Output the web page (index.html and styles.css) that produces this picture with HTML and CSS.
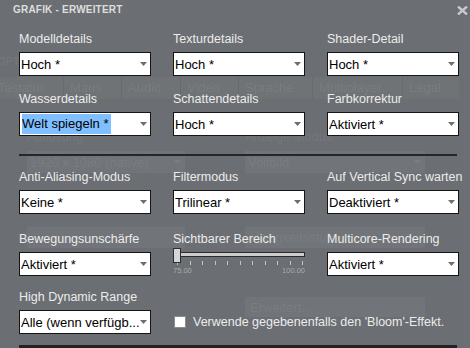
FILE: index.html
```html
<!DOCTYPE html>
<html lang="de">
<head>
<meta charset="utf-8">
<title>Grafik - Erweitert</title>
<link rel="stylesheet" href="styles.css">
</head>
<body>
<div class="screen">
  <div class="backdrop">
    <div class="bd-title">OPTIONEN</div>
    <div class="bd-tabs">
      <span class="bd-tab w64">Tastatur</span>
      <span class="bd-tab w58">Maus</span>
      <span class="bd-tab w59">Audio</span>
      <span class="bd-tab w58">Video</span>
      <span class="bd-tab w74">Sprache</span>
      <span class="bd-tab w90">Multiplayer</span>
      <span class="bd-tab w56">Legal</span>
    </div>
    <div class="bd-grid">
      <div class="bd-field">
        <div class="bd-label">Auflösung</div>
        <div class="bd-box">1920 x 1080 (native)<svg class="bd-arrow" width="7" height="4" viewBox="0 0 7 4"><path d="M0 0H7L3.5 4Z"/></svg></div>
      </div>
      <div class="bd-field">
        <div class="bd-label">Anzeige-Modus</div>
        <div class="bd-box">Vollbild<svg class="bd-arrow" width="7" height="4" viewBox="0 0 7 4"><path d="M0 0H7L3.5 4Z"/></svg></div>
      </div>
    </div>
    <div class="bd-grid bd-second">
      <div class="bd-box bd-plain"></div>
      <div class="bd-box bd-plain">Helligkeitsstufe</div>
    </div>
    <div class="bd-grid bd-third">
      <div class="bd-empty"></div>
      <div class="bd-box bd-plain bd-button">Erweitert...</div>
    </div>
  </div>

  <div class="dialog">
    <div class="header">
      <div class="title">GRAFIK - ERWEITERT</div>
      <svg class="close" width="11" height="9" viewBox="0 0 11 9"><path d="M1 0.5L10 8.5M10 0.5L1 8.5"/></svg>
    </div>

    <div class="body">
      <div class="row">
        <div class="field">
          <div class="label">Modelldetails</div>
          <div class="select"><span class="value">Hoch *</span><svg class="arrow" width="7" height="4" viewBox="0 0 7 4"><path d="M0 0H7L3.5 4Z"/></svg></div>
        </div>
        <div class="field">
          <div class="label">Texturdetails</div>
          <div class="select"><span class="value">Hoch *</span><svg class="arrow" width="7" height="4" viewBox="0 0 7 4"><path d="M0 0H7L3.5 4Z"/></svg></div>
        </div>
        <div class="field">
          <div class="label">Shader-Detail</div>
          <div class="select"><span class="value">Hoch *</span><svg class="arrow" width="7" height="4" viewBox="0 0 7 4"><path d="M0 0H7L3.5 4Z"/></svg></div>
        </div>
      </div>

      <div class="row row-2">
        <div class="field">
          <div class="label">Wasserdetails</div>
          <div class="select"><span class="value selected">Welt spiegeln *</span><svg class="arrow" width="7" height="4" viewBox="0 0 7 4"><path d="M0 0H7L3.5 4Z"/></svg></div>
        </div>
        <div class="field">
          <div class="label">Schattendetails</div>
          <div class="select"><span class="value">Hoch *</span><svg class="arrow" width="7" height="4" viewBox="0 0 7 4"><path d="M0 0H7L3.5 4Z"/></svg></div>
        </div>
        <div class="field">
          <div class="label">Farbkorrektur</div>
          <div class="select"><span class="value">Aktiviert *</span><svg class="arrow" width="7" height="4" viewBox="0 0 7 4"><path d="M0 0H7L3.5 4Z"/></svg></div>
        </div>
      </div>

      <div class="separator"></div>

      <div class="row row-3">
        <div class="field">
          <div class="label">Anti-Aliasing-Modus</div>
          <div class="select"><span class="value">Keine *</span><svg class="arrow" width="7" height="4" viewBox="0 0 7 4"><path d="M0 0H7L3.5 4Z"/></svg></div>
        </div>
        <div class="field">
          <div class="label">Filtermodus</div>
          <div class="select"><span class="value">Trilinear *</span><svg class="arrow" width="7" height="4" viewBox="0 0 7 4"><path d="M0 0H7L3.5 4Z"/></svg></div>
        </div>
        <div class="field">
          <div class="label">Auf Vertical Sync warten</div>
          <div class="select"><span class="value">Deaktiviert *</span><svg class="arrow" width="7" height="4" viewBox="0 0 7 4"><path d="M0 0H7L3.5 4Z"/></svg></div>
        </div>
      </div>

      <div class="row row-4">
        <div class="field">
          <div class="label">Bewegungsunschärfe</div>
          <div class="select"><span class="value">Aktiviert *</span><svg class="arrow" width="7" height="4" viewBox="0 0 7 4"><path d="M0 0H7L3.5 4Z"/></svg></div>
        </div>
        <div class="field">
          <div class="label">Sichtbarer Bereich</div>
          <div class="slider">
            <div class="track"></div>
            <div class="thumb"></div>
            <div class="ticks">
              <i></i><i></i><i></i><i></i><i></i><i></i><i></i><i></i><i></i><i></i><i></i>
            </div>
            <div class="scale"><span>75.00</span><span>100.00</span></div>
          </div>
        </div>
        <div class="field">
          <div class="label">Multicore-Rendering</div>
          <div class="select"><span class="value">Aktiviert *</span><svg class="arrow" width="7" height="4" viewBox="0 0 7 4"><path d="M0 0H7L3.5 4Z"/></svg></div>
        </div>
      </div>

      <div class="row row-5">
        <div class="field">
          <div class="label">High Dynamic Range</div>
          <div class="select"><span class="value">Alle (wenn verfügb...</span><svg class="arrow" width="7" height="4" viewBox="0 0 7 4"><path d="M0 0H7L3.5 4Z"/></svg></div>
        </div>
        <div class="check-field">
          <span class="checkbox"></span>
          <span class="check-label">Verwende gegebenenfalls den 'Bloom'-Effekt.</span>
        </div>
      </div>

      <div class="bottom-bar"></div>
    </div>
  </div>
</div>
</body>
</html>
```

FILE: styles.css
```css
* {
  box-sizing: border-box;
}

html, body {
  margin: 0;
  padding: 0;
}

body {
  width: 470px;
  height: 348px;
  overflow: hidden;
  background: #6b6e72;
  font-family: "Liberation Sans", Arial, sans-serif;
}

.screen {
  position: relative;
  width: 470px;
  height: 348px;
  overflow: hidden;
  background: #6b6e72;
}

/* ---------- faint underlying options screen ---------- */
.backdrop {
  padding-top: 56px;
  color: rgba(255, 255, 255, 0.075);
}

.bd-title {
  margin-left: -2px;
  font-size: 10px;
  line-height: 12px;
  font-weight: bold;
  letter-spacing: 0.3px;
}

.bd-tabs {
  display: flex;
  margin-top: 9px;
  width: 459px;
  height: 22px;
  background: rgba(255, 255, 255, 0.035);
}

.bd-tab {
  display: block;
  height: 22px;
  padding-left: 6px;
  font-size: 13px;
  line-height: 22px;
  border-right: 1px solid rgba(0, 0, 0, 0.07);
  white-space: nowrap;
  overflow: hidden;
}

.bd-tab.w64 { width: 64px; padding-left: 0; text-indent: -2px; }
.bd-tab.w58 { width: 58px; }
.bd-tab.w59 { width: 59px; }
.bd-tab.w74 { width: 74px; }
.bd-tab.w90 { width: 90px; }
.bd-tab.w56 { width: 56px; border-right: 0; }

.bd-grid {
  display: grid;
  grid-template-columns: 158px 180px;
  column-gap: 60px;
  margin-top: 30px;
  padding-left: 27px;
}

.bd-label {
  font-size: 12.5px;
  line-height: 17px;
  margin-bottom: 5px;
  padding-left: 0;
}

.bd-box {
  display: flex;
  align-items: center;
  height: 22px;
  padding: 0 4px 0 3px;
  background: rgba(255, 255, 255, 0.045);
  font-size: 13px;
  white-space: nowrap;
}

.bd-arrow {
  margin-left: auto;
  fill: rgba(255, 255, 255, 0.07);
}

.bd-second {
  margin-top: 54px;
}

.bd-plain {
  height: 21px;
  padding-left: 5px;
}

.bd-third {
  margin-top: 49px;
}

.bd-button {
  height: 20px;
}

/* ---------- advanced graphics dialog ---------- */
.dialog {
  position: absolute;
  inset: 0;
}

.header {
  display: flex;
  justify-content: space-between;
  align-items: flex-start;
  height: 31px;
  padding: 4px 2px 0 13px;
}

.title {
  font-size: 10px;
  line-height: 12px;
  font-weight: bold;
  letter-spacing: 0.2px;
  color: #dedede;
}

.close {
  margin-top: 2px;
  stroke: #c9c9c9;
  stroke-width: 2.4;
  fill: none;
}

.body {
  padding-left: 19px;
}

.row {
  display: grid;
  grid-template-columns: repeat(3, 132px);
  column-gap: 22px;
  align-items: start;
}

.row-2 { margin-top: 15px; }
.row-3 { margin-top: 13px; }
.row-4 { margin-top: 17px; }
.row-5 { margin-top: 13px; }

.label {
  font-size: 12.5px;
  line-height: 17px;
  margin-bottom: 4px;
  color: #ececec;
  white-space: nowrap;
}

.select {
  display: flex;
  align-items: center;
  height: 24px;
  padding: 0 3px 0 1px;
  border: 1px solid #151515;
  background: #ffffff;
  color: #000000;
  font-size: 13px;
  white-space: nowrap;
  overflow: hidden;
}

.value {
  flex: 0 1 auto;
  overflow: hidden;
}

.value.selected {
  display: inline-block;
  line-height: 20px;
  margin-left: 1px;
  padding-right: 3px;
  background: #80bfff;
}

.arrow {
  flex: none;
  margin-left: auto;
  fill: #6e6e6e;
}

.separator {
  margin-top: 18px;
  width: 438px;
  height: 2px;
  background: #262626;
}

/* slider */
.slider {
  position: relative;
  height: 24px;
}

.track {
  margin-top: 1px;
  height: 5px;
  border: 1px solid #2b2b2b;
  background: #cdcdcd;
}

.thumb {
  position: absolute;
  left: 0;
  top: -4px;
  width: 8px;
  height: 15px;
  border: 1px solid #2e2e2e;
  background: #d6d6d6;
}

.ticks {
  display: flex;
  justify-content: space-between;
  height: 4px;
  margin-top: 4px;
  padding: 0 2px 0 4px;
}

.ticks i {
  display: block;
  width: 1px;
  height: 4px;
  background: #c4c4c4;
}

.scale {
  display: flex;
  justify-content: space-between;
  margin-top: 2px;
  font-size: 7.5px;
  line-height: 8px;
  color: #a9abad;
}

/* checkbox */
.check-field {
  grid-column: 2 / span 2;
  align-self: end;
  display: flex;
  align-items: center;
  height: 24px;
  white-space: nowrap;
}

.checkbox {
  display: block;
  width: 12px;
  height: 12px;
  margin-left: 1px;
  border: 1px solid #8c8c8c;
  background: #ffffff;
}

.check-label {
  margin-left: 7px;
  font-size: 12.5px;
  line-height: 17px;
  color: #ececec;
}

.bottom-bar {
  margin-top: 11px;
  width: 438px;
  height: 4px;
  background: #232323;
}
```
